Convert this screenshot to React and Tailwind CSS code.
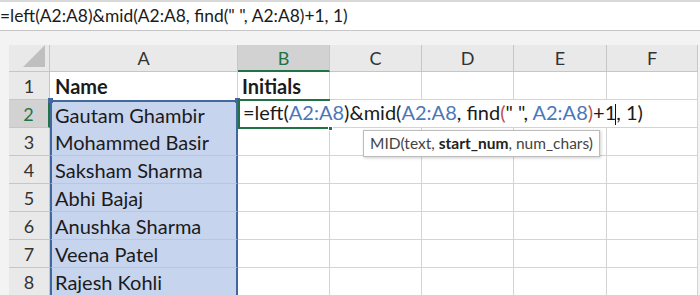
import React from "react";

const names = [
  "Gautam Ghambir",
  "Mohammed Basir",
  "Saksham Sharma",
  "Abhi Bajaj",
  "Anushka Sharma",
  "Veena Patel",
  "Rajesh Kohli",
];

const cols = ["A", "B", "C", "D", "E", "F"];

function Ref({ children }) {
  return <span className="text-[#4a78b8]">{children}</span>;
}

function Paren({ children }) {
  return <span className="text-[#c0504d]">{children}</span>;
}

export default function App() {
  return (
    <div className="w-[700px] h-[295px] overflow-hidden bg-[#f3f3f3] font-['Lato',sans-serif] text-[#1b1b1b]">
      {/* formula bar */}
      <div className="h-[31px] bg-white border-t-2 border-[#d9d9d9] border-b border-b-[#c6c6c6] flex items-center text-[17.4px] whitespace-nowrap">
        =left(A2:A8)&amp;mid(A2:A8, find(" ", A2:A8)+1, 1)
      </div>

      <div className="h-[14px]" />

      <div className="flex">
        <div className="w-[9px] shrink-0" />

        <div className="grid grid-cols-[41px_188px_92px_92px_92px_93px_91px] grid-rows-[27px_repeat(8,28px)] text-[20px] leading-none">
          {/* header row */}
          <div className="bg-[#e9e9e9] border-r border-b border-[#c6c6c6] flex items-end justify-end pr-[4px] pb-[4px]">
            <div className="w-0 h-0 border-l-[22px] border-l-transparent border-b-[22px] border-b-[#bfbfbf]" />
          </div>
          {cols.map((c) => (
            <div
              key={c}
              className={
                c === "B"
                  ? "bg-[#d2d2d2] border-r border-[#c6c6c6] border-b-2 border-b-[#217346] text-[#217346] flex items-center justify-center text-[18px]"
                  : "bg-[#e9e9e9] border-r border-b border-[#c6c6c6] flex items-center justify-center text-[18px] text-[#333]"
              }
            >
              {c}
            </div>
          ))}

          {/* row 1 */}
          <div className="bg-[#e9e9e9] border-r border-b border-[#c6c6c6] flex items-center justify-center text-[18px] text-[#333]">
            1
          </div>
          <div className="bg-white border-r border-[#d4d4d4] flex items-center pl-[5px] font-bold">
            Name
          </div>
          <div className="bg-white border-r border-b border-[#d4d4d4] flex items-center pl-[4px] font-bold">
            Initials
          </div>
          {cols.slice(2).map((c) => (
            <div key={c} className="bg-white border-r border-b border-[#d4d4d4]" />
          ))}

          {/* rows 2-8 */}
          {names.map((name, i) => {
            const row = i + 2;
            const first = row === 2;
            return (
              <React.Fragment key={row}>
                <div
                  className={
                    first
                      ? "bg-[#d2d2d2] border-r-2 border-r-[#217346] border-b border-b-[#c6c6c6] flex items-center justify-center text-[18px] text-[#217346]"
                      : "bg-[#e9e9e9] border-r border-b border-[#c6c6c6] flex items-center justify-center text-[18px] text-[#333]"
                  }
                >
                  {row}
                </div>
                <div
                  className={
                    "relative bg-[#c7d4ee] border-x-2 border-[#42679d] flex items-center pl-[3px] " +
                    (first ? "border-t-2" : "border-b border-b-[#b8c6e2]")
                  }
                >
                  {first && (
                    <>
                      <span className="absolute -top-[4px] -left-[4px] w-[5px] h-[5px] bg-[#42679d]" />
                      <span className="absolute -top-[4px] -right-[4px] w-[5px] h-[5px] bg-[#42679d]" />
                    </>
                  )}
                  {name}
                </div>
                {first ? (
                  <div className="col-span-5 relative bg-white border-b border-[#d4d4d4] border-r flex items-center pl-[5px] whitespace-nowrap">
                    <div className="absolute left-0 -top-px w-[92px] h-[30px] border-l-2 border-y-2 border-[#217346]">
                      <span className="absolute -bottom-[4px] -right-[3px] w-[5px] h-[5px] bg-[#217346] border border-white" />
                    </div>
                    <span className="relative">
                      =left(<Ref>A2:A8</Ref>)&amp;mid(<Ref>A2:A8</Ref>, find<Paren>(</Paren>" ", <Ref>A2:A8</Ref>
                      <Paren>)</Paren>+1
                      <span className="inline-block w-px h-[21px] bg-[#111] align-middle -ml-px" />
                      , 1)
                    </span>
                    <div className="absolute left-[125px] top-[30px] z-10 h-[27px] px-[6px] bg-white border border-[#bcbcbc] shadow-[1px_1px_3px_rgba(0,0,0,0.2)] flex items-center text-[15.5px] text-[#444] whitespace-nowrap">
                      MID(text,&nbsp;<b className="text-[#222]">start_num</b>, num_chars)
                    </div>
                  </div>
                ) : (
                  cols.slice(1).map((c) => (
                    <div key={c} className="bg-white border-r border-b border-[#d4d4d4]" />
                  ))
                )}
              </React.Fragment>
            );
          })}
        </div>
      </div>
    </div>
  );
}
